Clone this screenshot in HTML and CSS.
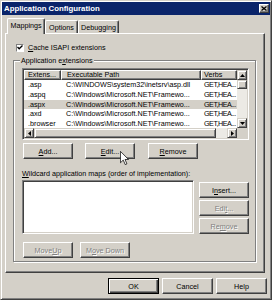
FILE: index.html
```html
<!DOCTYPE html>
<html lang="en">
<head>
  <meta charset="UTF-8" />
  <title>Application Configuration</title>
  <link rel="stylesheet" href="styles.css">
</head>
<body>
  <div class="window">
    <div class="titlebar">
      <span class="title">Application Configuration</span>
      <span class="close">
        <svg width="6" height="5" viewBox="0 0 6 5"><path d="M0.5 0.5 L5.5 4.5 M5.5 0.5 L0.5 4.5" stroke="#000" stroke-width="1.3"/></svg>
      </span>
    </div>

    <div class="tabs">
      <span class="tab active">Mappings</span>
      <span class="tab tab-options">Options</span>
      <span class="tab tab-debug">Debugging</span>
    </div>

    <div class="panel">
      <div class="check">
        <span class="box">
          <svg width="6" height="5" viewBox="0 0 6 5"><path d="M0.5 2 L2.2 3.8 L5.5 0.5" stroke="#000" stroke-width="1.3" fill="none"/></svg>
        </span>
        <span><u>C</u>ache ISAPI extensions</span>
      </div>

      <div class="group">
        <span class="legend">Application e<u>x</u>tensions</span>

        <div class="listview">
          <div class="lv-main">
            <div class="lv-head">
              <span class="c1">Extens...</span>
              <span class="c2">Executable Path</span>
              <span class="c3">Verbs</span>
            </div>
            <div class="lv-row"><span class="c1">.asp</span><span class="c2">C:\WINDOWS\system32\inetsrv\asp.dll</span><span class="c3">GET,HEA...</span></div>
            <div class="lv-row"><span class="c1">.aspq</span><span class="c2">C:\Windows\Microsoft.NET\Framewo...</span><span class="c3">GET,HEA...</span></div>
            <div class="lv-row selected"><span class="c1">.aspx</span><span class="c2">C:\Windows\Microsoft.NET\Framewo...</span><span class="c3">GET,HEA...</span></div>
            <div class="lv-row"><span class="c1">.axd</span><span class="c2">C:\Windows\Microsoft.NET\Framewo...</span><span class="c3">GET,HEA...</span></div>
            <div class="lv-row"><span class="c1">.browser</span><span class="c2">C:\Windows\Microsoft.NET\Framewo...</span><span class="c3">GET,HEA...</span></div>
          </div>
          <div class="vscroll">
            <span class="arrow"><svg width="5" height="3" viewBox="0 0 5 3"><path d="M0 3 L2.5 0 L5 3 Z"/></svg></span>
            <span class="thumb"></span>
            <span class="track"></span>
            <span class="arrow"><svg width="5" height="3" viewBox="0 0 5 3"><path d="M0 0 L2.5 3 L5 0 Z"/></svg></span>
          </div>
          <div class="hscroll">
            <span class="arrow"><svg width="3" height="5" viewBox="0 0 3 5"><path d="M3 0 L0 2.5 L3 5 Z"/></svg></span>
            <span class="thumb"></span>
            <span class="track"></span>
            <span class="arrow"><svg width="3" height="5" viewBox="0 0 3 5"><path d="M0 0 L3 2.5 L0 5 Z"/></svg></span>
          </div>
          <div class="corner"></div>
        </div>

        <div class="btnrow">
          <span class="btn btn-add"><u>A</u>dd...</span>
          <span class="btn btn-edit"><u>E</u>dit...</span>
          <span class="btn btn-remove"><u>R</u>emove</span>
        </div>

        <div class="wild-label"><u>W</u>ildcard application maps (order of implementation):</div>

        <div class="wild">
          <div class="wild-list"></div>
          <div class="wild-btns">
            <span class="btn">I<u>n</u>sert...</span>
            <span class="btn disabled">Edi<u>t</u>...</span>
            <span class="btn disabled">Re<u>m</u>ove</span>
          </div>
        </div>

        <div class="btnrow">
          <span class="btn disabled btn-add">Move <u>U</u>p</span>
          <span class="btn disabled btn-down">M<u>o</u>ve Down</span>
        </div>
      </div>
    </div>

    <div class="footer">
      <span class="btn default">OK</span>
      <span class="btn">Cancel</span>
      <span class="btn">Help</span>
    </div>

    <svg class="cursor" width="9" height="14" viewBox="0 0 12 19">
      <path d="M0.5 0.5 L0.5 16 L4.3 12.3 L7 18.5 L9.3 17.5 L6.7 11.5 L11.5 11.5 Z" fill="#fff" stroke="#000" stroke-width="1"/>
    </svg>
  </div>
</body>
</html>
```

FILE: styles.css
```css
* {
  box-sizing: border-box;
}
body {
  margin: 0;
  background: #d4d0c8;
  font-family: "Liberation Sans", Arial, sans-serif;
  font-size: 7.2px;
  color: #000;
}
u {
  text-decoration-thickness: 1px;
  text-underline-offset: 1px;
}
.window {
  position: relative;
  width: 272px;
  height: 300px;
  padding: 1px;
  background: #d4d0c8;
  border: 1px solid;
  border-color: #d4d0c8 #404040 #404040 #d4d0c8;
  box-shadow: inset 1px 1px #fff, inset -1px -1px #808080;
}
.titlebar {
  height: 13px;
  padding: 0 1px 0 2px;
  background: #0a246a;
  display: flex;
  align-items: center;
  justify-content: space-between;
}
.title {
  color: #fff;
  font-weight: bold;
  font-size: 7.8px;
}
.close {
  width: 10px;
  height: 9px;
  background: #d4d0c8;
  border: 1px solid;
  border-color: #fff #404040 #404040 #fff;
  box-shadow: inset -1px -1px #808080;
  display: flex;
  align-items: center;
  justify-content: center;
}

/* tabs */
.tabs {
  display: flex;
  align-items: flex-end;
  height: 15px;
  margin: 3px 0 0 5px;
}
.tab {
  height: 13px;
  border: 1px solid;
  border-bottom: none;
  border-color: #fff #404040 #fff #fff;
  border-radius: 2px 2px 0 0;
  box-shadow: inset -1px 0 #808080;
  background: #d4d0c8;
  display: flex;
  align-items: center;
  justify-content: center;
}
.tab.active {
  position: relative;
  z-index: 1;
  width: 38px;
  height: 16px;
  margin-bottom: -1px;
  padding-bottom: 2px;
}
.tab-options { width: 33px; }
.tab-debug { width: 41px; }

.panel {
  height: 240px;
  margin: 0 5px 0 3px;
  border: 1px solid;
  border-color: #fff #404040 #404040 #fff;
  box-shadow: inset -1px -1px #808080;
}
.check {
  display: flex;
  align-items: center;
  gap: 4px;
  height: 9px;
  margin: 9px 0 0 10px;
}
.box {
  width: 8px;
  height: 8px;
  background: #fff;
  border: 1px solid;
  border-color: #808080 #fff #fff #808080;
  display: flex;
  align-items: center;
  justify-content: center;
}

/* group box */
.group {
  position: relative;
  height: 202px;
  margin: 8px 8px 0 7px;
  padding: 7px 6px 0 8px;
  border: 1px solid #808080;
  box-shadow: 1px 1px #fff, inset 1px 1px #fff;
}
.legend {
  position: absolute;
  top: -6px;
  left: 6px;
  padding: 0 1px;
  line-height: 11px;
  background: #d4d0c8;
}

/* list view */
.listview {
  height: 72px;
  padding: 1px;
  background: #fff;
  border: 1px solid;
  border-color: #808080 #fff #fff #808080;
  box-shadow: inset 1px 1px #404040, inset -1px -1px #d4d0c8;
  display: grid;
  grid-template-columns: 1fr 10px;
  grid-template-rows: 58px 10px;
}
.lv-main {
  overflow: hidden;
}
.lv-head {
  display: flex;
  height: 10px;
}
.lv-head span {
  height: 10px;
  line-height: 8px;
  background: #d4d0c8;
  border: 1px solid;
  border-color: #fff #404040 #404040 #fff;
  box-shadow: inset -1px -1px #808080;
  white-space: nowrap;
  overflow: hidden;
}
.lv-row {
  display: flex;
  height: 9.75px;
  line-height: 9.75px;
}
.lv-row.selected {
  background: #d4d0c8;
}
.lv-row span {
  white-space: nowrap;
  overflow: hidden;
}
.c1 { width: 37px; padding-left: 4px; }
.c2 { width: 140px; padding-left: 5px; }
.c3 { width: 36px; padding-left: 3px; }
.lv-row .c3 { letter-spacing: -0.5px; }
.lv-head .c1 { padding-left: 3px; }
.lv-head .c2 { padding-left: 5px; }
.lv-head .c3 { padding-left: 2px; }

.vscroll, .hscroll {
  display: flex;
  background: #eceae5;
}
.vscroll {
  flex-direction: column;
}
.arrow, .thumb {
  flex: none;
  width: 10px;
  height: 10px;
  background: #d4d0c8;
  border: 1px solid;
  border-color: #d4d0c8 #404040 #404040 #d4d0c8;
  box-shadow: inset 1px 1px #fff, inset -1px -1px #808080;
  display: flex;
  align-items: center;
  justify-content: center;
}
.vscroll .thumb {
  height: 9px;
}
.vscroll .track {
  flex: 1;
}
.hscroll .thumb {
  flex: 1;
  width: auto;
}
.hscroll .track {
  width: 11px;
}
.corner {
  background: #d4d0c8;
}

/* buttons */
.btn {
  flex: none;
  width: 50px;
  height: 16px;
  background: #d4d0c8;
  border: 1px solid;
  border-color: #fff #404040 #404040 #fff;
  box-shadow: inset -1px -1px #808080;
  display: flex;
  align-items: center;
  justify-content: center;
  white-space: nowrap;
}
.btn.disabled {
  color: #808080;
  text-shadow: 1px 1px #fff;
}
.btn.default {
  border-color: #000;
  box-shadow: inset 1px 1px #fff, inset -1px -1px #404040, inset -2px -2px #808080;
}
.btnrow {
  display: flex;
  margin-top: 3px;
}
.btn-add { margin-left: 1px; }
.btn-edit { margin-left: 12px; }
.btn-remove { margin-left: 13px; }
.btn-down { margin-left: 7px; }

.wild-label {
  margin-top: 10px;
  line-height: 9px;
}
.wild {
  display: flex;
  margin-top: 2px;
}
.wild-list {
  width: 172px;
  height: 54px;
  background: #fff;
  border: 1px solid;
  border-color: #808080 #fff #fff #808080;
  box-shadow: inset 1px 1px #404040, inset -1px -1px #d4d0c8;
}
.wild-btns {
  display: flex;
  flex-direction: column;
  gap: 2px;
  margin: 2px 0 0 5px;
}
.group > .btnrow:last-child {
  margin-top: 8px;
}

.footer {
  display: flex;
  justify-content: flex-end;
  gap: 3px;
  margin-top: 5px;
  padding-right: 3px;
}
.footer .btn {
  width: 51px;
}

.cursor {
  position: absolute;
  left: 119px;
  top: 150px;
}
```
